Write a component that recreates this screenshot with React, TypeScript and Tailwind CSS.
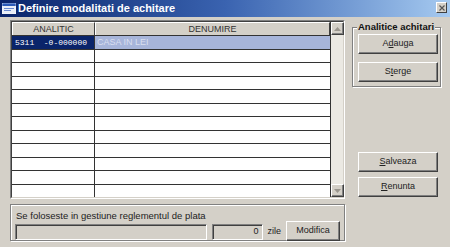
import React from "react";

const font = { fontFamily: '"Liberation Sans", Arial, sans-serif' };

function Btn({ children, className = "" }: { children: React.ReactNode; className?: string }) {
  return (
    <div
      className={
        "flex items-center justify-center bg-[#d4d0c8] border-t border-l border-t-white border-l-white border-r border-b border-r-[#404040] border-b-[#404040] shadow-[inset_-1px_-1px_0_#808080] text-[9px] text-[#222] " +
        className
      }
    >
      {children}
    </div>
  );
}

function ScrollBtn({ up }: { up: boolean }) {
  return (
    <div className="w-[13px] h-[13px] bg-[#d4d0c8] border-t border-l border-t-white border-l-white border-r border-b border-r-[#404040] border-b-[#404040] shadow-[inset_-1px_-1px_0_#808080] flex items-center justify-center">
      <svg width="7" height="4" viewBox="0 0 7 4">
        {up ? <polygon points="3.5,0 7,4 0,4" fill="#9a968e" /> : <polygon points="0,0 7,0 3.5,4" fill="#9a968e" />}
      </svg>
    </div>
  );
}

export default function App() {
  const rows = Array.from({ length: 12 }, (_, i) => i);
  return (
    <div className="w-[450px] h-[247px] bg-[#d4d0c8] overflow-hidden relative" style={font}>
      {/* title bar */}
      <div className="h-[17px] flex items-center bg-linear-to-r from-[#0a246a] via-[#3a63b0] to-[#a6caf0] relative">
        <svg width="14" height="11" viewBox="0 0 14 11" className="ml-[2px]">
          <rect x="0" y="0" width="14" height="11" fill="#e8eef8" />
          <rect x="0" y="0" width="14" height="3" fill="#2a5ab8" />
          <rect x="2" y="5" width="10" height="1" fill="#6a8ad0" />
          <rect x="2" y="7" width="7" height="1" fill="#6a8ad0" />
          <rect x="0" y="0" width="14" height="11" fill="none" stroke="#ffffff" strokeWidth="0.6" />
        </svg>
        <span className="ml-[2px] text-white font-bold text-[11px] leading-none">Definire modalitati de achitare</span>
        <div className="absolute right-[3px] top-[2px] w-[11px] h-[11px] bg-[#d4d0c8] border-t border-l border-t-white border-l-white border-r border-b border-r-[#404040] border-b-[#404040] flex items-center justify-center">
          <svg width="6" height="6" viewBox="0 0 6 6">
            <path d="M0.5 0.5 L5.5 5.5 M5.5 0.5 L0.5 5.5" stroke="#555" strokeWidth="1.2" />
          </svg>
        </div>
      </div>

      <div className="flex pl-[10px] pt-[3px]">
        {/* left column */}
        <div className="w-[335px] flex flex-col">
          {/* grid */}
          <div className="border-t border-l border-t-[#808080] border-l-[#808080] border-r border-b border-r-white border-b-white">
            <div className="border-t border-l border-t-[#404040] border-l-[#404040] border-r border-b border-r-[#d4d0c8] border-b-[#d4d0c8] flex bg-white">
              <div className="flex-1 flex flex-col">
                <div className="flex h-[13px]">
                  <div className="w-[83px] flex items-center justify-center bg-[#d4d0c8] border-t border-l border-t-white border-l-white border-r border-r-[#404040] text-[9px] text-[#333] leading-none">
                    ANALITIC
                  </div>
                  <div className="flex-1 flex items-center justify-center bg-[#d4d0c8] border-t border-l border-t-white border-l-white border-r border-r-[#404040] text-[9px] text-[#333] leading-none">
                    DENUMIRE
                  </div>
                </div>
                {rows.map((i) => (
                  <div
                    key={i}
                    className={"flex border-t border-t-[#333333] " + (i % 2 === 0 ? "h-[14px]" : "h-[13px]")}
                  >
                    <div
                      className={
                        "w-[83px] border-r border-r-[#333333] flex items-center " +
                        (i === 0 ? "bg-[#0a246a]" : "bg-white")
                      }
                    >
                      {i === 0 && (
                        <span
                          className="ml-[3px] text-white text-[8px] leading-none whitespace-pre"
                          style={{ fontFamily: '"Liberation Mono", "Courier New", monospace' }}
                        >
                          5311  -0-000000
                        </span>
                      )}
                    </div>
                    <div className={"flex-1 flex items-center " + (i === 0 ? "bg-[#a7b5da]" : "bg-white")}>
                      {i === 0 && (
                        <span className="ml-[2px] text-[#d9dff0] text-[9px] leading-none">CASA IN LEI</span>
                      )}
                    </div>
                  </div>
                ))}
              </div>
              {/* scrollbar */}
              <div className="w-[13px] flex flex-col bg-[#ebe9e3] border-l border-l-[#333333]">
                <ScrollBtn up />
                <div className="flex-1" />
                <ScrollBtn up={false} />
              </div>
            </div>
          </div>

          {/* bottom group */}
          <div className="mt-[5px] h-[37px] border border-[#808080] shadow-[inset_1px_1px_0_#ffffff,1px_1px_0_#ffffff] px-[4px] pt-[6px]">
            <div className="text-[9.5px] leading-none text-[#222] ml-[1px]">Se foloseste in gestiune reglementul de plata</div>
            <div className="flex items-center mt-[2px]">
              <div className="w-[192px] h-[16px] border-t border-l border-t-[#808080] border-l-[#808080] border-r border-b border-r-white border-b-white">
                <div className="w-full h-full border-t border-l border-t-[#404040] border-l-[#404040] bg-[#d4d0c8]" />
              </div>
              <div className="ml-[5px] w-[51px] h-[16px] border-t border-l border-t-[#808080] border-l-[#808080] border-r border-b border-r-white border-b-white">
                <div className="w-full h-full border-t border-l border-t-[#404040] border-l-[#404040] bg-[#d4d0c8] flex items-center justify-end pr-[3px] text-[9px] text-[#222]">
                  0
                </div>
              </div>
              <span className="ml-[5px] text-[9px] text-[#222]">zile</span>
              <Btn className="ml-[5px] w-[54px] h-[20px] -mt-[2px]">Modifica</Btn>
            </div>
          </div>
        </div>

        {/* right column */}
        <div className="ml-[7px] w-[89px] flex flex-col">
          <div className="mt-[7px] h-[60px] border border-[#808080] shadow-[inset_1px_1px_0_#ffffff,1px_1px_0_#ffffff] relative flex flex-col items-start pl-[5px] pt-[6px] gap-[8px]">
            <span className="absolute -top-[7px] left-[4px] px-[1px] bg-[#d4d0c8] text-[9.5px] font-bold text-[#111] leading-[12px]">
              Analitice achitari
            </span>
            <Btn className="w-[80px] h-[20px]">
              A<span className="underline">d</span>auga
            </Btn>
            <Btn className="w-[80px] h-[20px]">
              S<span className="underline">t</span>erge
            </Btn>
          </div>
          <Btn className="mt-[65px] ml-[6px] w-[80px] h-[20px]">
            <span className="underline">S</span>alveaza
          </Btn>
          <Btn className="mt-[5px] ml-[6px] w-[80px] h-[20px]">
            <span className="underline">R</span>enunta
          </Btn>
        </div>
      </div>
    </div>
  );
}
